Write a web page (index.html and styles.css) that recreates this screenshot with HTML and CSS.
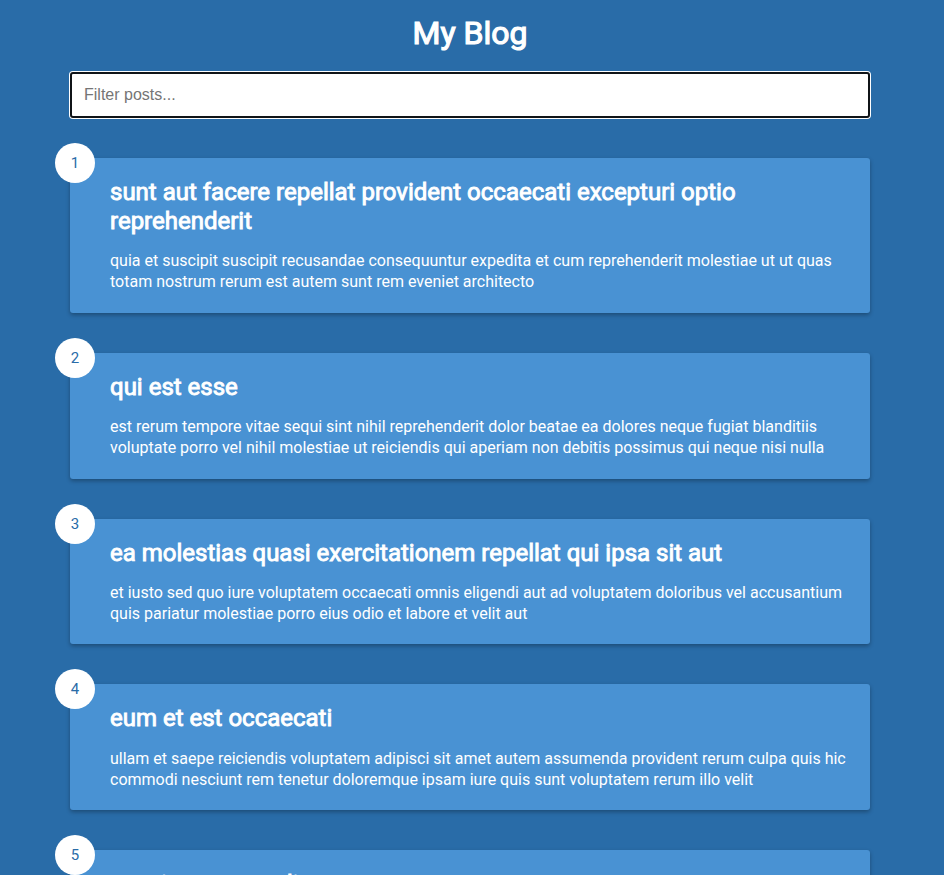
FILE: index.html
```html
<!DOCTYPE html>
<html lang="en">
<head>
<meta charset="UTF-8">
<title>My Blog</title>
<link rel="stylesheet" href="styles.css">
</head>
<body>
  <h1 class="title">My Blog</h1>
  <div class="filter-container">
    <input type="text" class="filter" placeholder="Filter posts...">
  </div>
  <div class="posts">
    <div class="post">
      <div class="number">1</div>
      <div class="post-info">
        <h2 class="post-title">sunt aut facere repellat provident occaecati excepturi optio reprehenderit</h2>
        <p class="post-body">quia et suscipit suscipit recusandae consequuntur expedita et cum reprehenderit molestiae ut ut quas totam nostrum rerum est autem sunt rem eveniet architecto</p>
      </div>
    </div>
    <div class="post">
      <div class="number">2</div>
      <div class="post-info">
        <h2 class="post-title">qui est esse</h2>
        <p class="post-body">est rerum tempore vitae sequi sint nihil reprehenderit dolor beatae ea dolores neque fugiat blanditiis voluptate porro vel nihil molestiae ut reiciendis qui aperiam non debitis possimus qui neque nisi nulla</p>
      </div>
    </div>
    <div class="post">
      <div class="number">3</div>
      <div class="post-info">
        <h2 class="post-title">ea molestias quasi exercitationem repellat qui ipsa sit aut</h2>
        <p class="post-body">et iusto sed quo iure voluptatem occaecati omnis eligendi aut ad voluptatem doloribus vel accusantium quis pariatur molestiae porro eius odio et labore et velit aut</p>
      </div>
    </div>
    <div class="post">
      <div class="number">4</div>
      <div class="post-info">
        <h2 class="post-title">eum et est occaecati</h2>
        <p class="post-body">ullam et saepe reiciendis voluptatem adipisci sit amet autem assumenda provident rerum culpa quis hic commodi nesciunt rem tenetur doloremque ipsam iure quis sunt voluptatem rerum illo velit</p>
      </div>
    </div>
    <div class="post">
      <div class="number">5</div>
      <div class="post-info">
        <h2 class="post-title">nesciunt quas odio</h2>
        <p class="post-body">repudiandae veniam quaerat sunt sed alias aut fugiat sit autem sed est voluptatem omnis possimus esse voluptatibus quis est aut tenetur dolor neque</p>
      </div>
    </div>
  </div>
</body>
</html>
```
FILE: styles.css
```css
* { box-sizing: border-box; }

body {
  background-color: #296ca8;
  color: #fff;
  font-family: Roboto, "Noto Sans", sans-serif;
  display: flex;
  flex-direction: column;
  align-items: center;
  margin: 0;
  padding: 0 4px 100px 0;
}

.title {
  margin: 13.5px 0 0;
  font-size: 32px;
  font-weight: 400;
  -webkit-text-stroke: 1.2px #fff;
  text-align: center;
}

.filter-container {
  margin-top: 20px;
  width: 800px;
}

.filter {
  display: block;
  width: 100%;
  padding: 12px;
  font-size: 16px;
  font-family: "Liberation Sans", Arial, sans-serif;
  border: 2px solid #101418;
  border-radius: 3px;
  box-shadow: 0 0 0 1px #fff;
  outline: none;
  color: #222;
  background: #fff;
}

.filter::placeholder { color: #757575; }

.posts {
  display: flex;
  flex-direction: column;
}

.post {
  position: relative;
  background-color: #4992d3;
  box-shadow: 0 2px 4px rgba(0, 0, 0, 0.3);
  border-radius: 3px;
  padding: 20px;
  margin: 40px 0 0;
  display: flex;
  width: 800px;
}

.post-info { margin-left: 20px; }

.post-title {
  margin: 0;
  font-size: 24px;
  font-weight: 400;
  line-height: 29.3px;
  -webkit-text-stroke: 0.9px #fff;
}

.post-body {
  margin: 15px 0 0;
  line-height: 1.3;
  font-size: 16px;
}

.number {
  position: absolute;
  top: -15px;
  left: -15px;
  font-size: 15px;
  width: 40px;
  height: 40px;
  border-radius: 50%;
  background: #fff;
  color: #296ca8;
  display: flex;
  align-items: center;
  justify-content: center;
}
```
